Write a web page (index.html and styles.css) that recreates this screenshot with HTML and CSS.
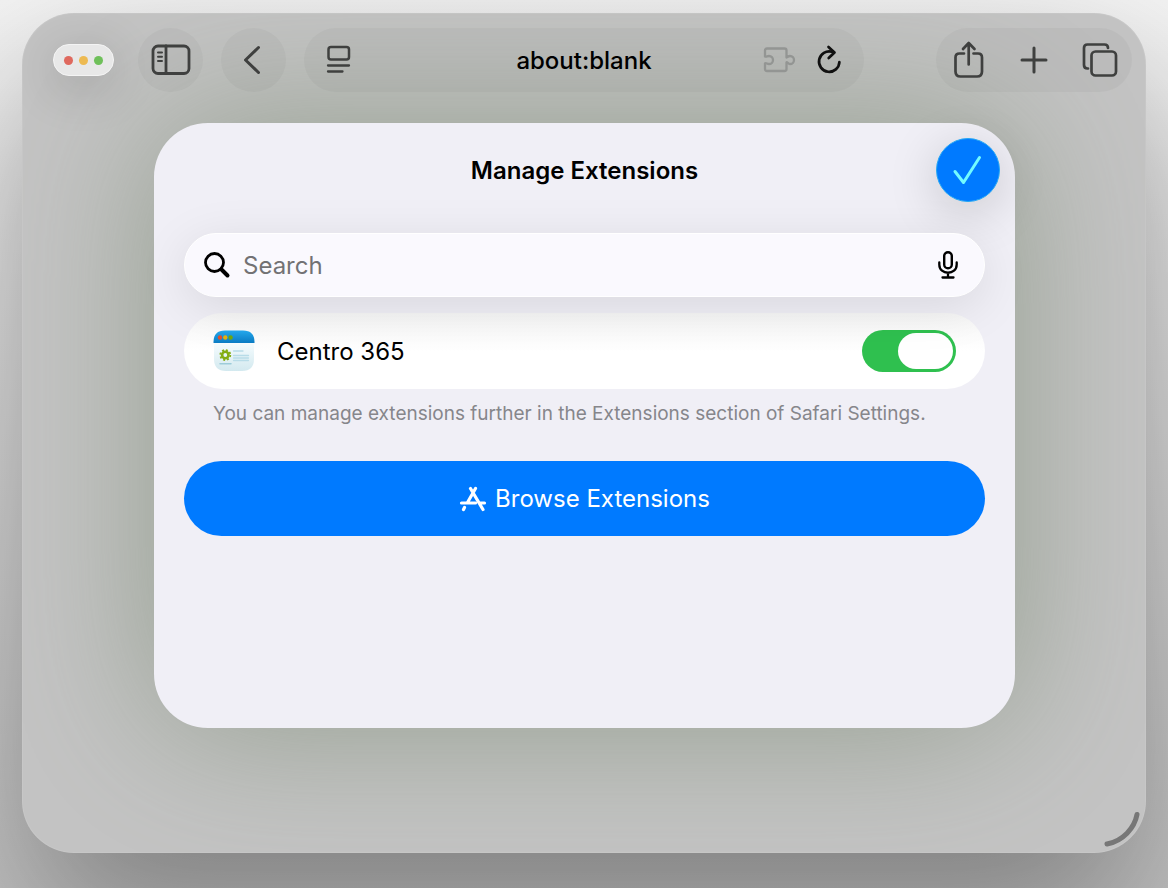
FILE: index.html
```html
<!DOCTYPE html>
<html lang="en">
<head>
  <meta charset="UTF-8">
  <meta name="viewport" content="width=device-width, initial-scale=1.0">
  <title>Manage Extensions</title>
  <link rel="stylesheet" href="styles.css">
</head>
<body>

  <div class="window">
    <header class="toolbar">
      <div class="window-controls">
        <span class="dot red"></span>
        <span class="dot yellow"></span>
        <span class="dot green"></span>
      </div>

      <button class="round-btn" type="button" aria-label="Show sidebar">
        <svg width="40" height="32" viewBox="0 0 40 32">
          <rect x="2" y="2" width="36" height="27.500" rx="5" stroke-width="2.800"/>
          <path d="M15 2v27" stroke-width="2.800"/>
          <path d="M7 8.500h4M7 12.700h4M7 17h4" stroke-width="2"/>
        </svg>
      </button>

      <button class="round-btn" type="button" aria-label="Back">
        <svg width="22" height="30" viewBox="0 0 22 30">
          <path d="M15.500 2.500L2.500 15l13 12.500" stroke-width="3"/>
        </svg>
      </button>

      <div class="address-bar">
        <button type="button" aria-label="Page menu">
          <svg width="26" height="30" viewBox="0 0 26 30">
            <rect x="2.500" y="2" width="20.500" height="12.500" rx="2.500" stroke-width="2.500"/>
            <path d="M2 20.500h21M2 26.500h14.500" stroke-width="2.300"/>
          </svg>
        </button>
        <a class="address" href="about:blank">about:blank</a>
        <button class="muted" type="button" aria-label="Extensions">
          <svg width="34" height="28" viewBox="0 0 34 28">
            <path d="M3 10.500V4.500Q3 2.500 5 2.500H22.500Q24.500 2.500 24.500 4.500V11.500C25.500 11.800 26 10 28 10A4 4 0 0 1 28 18C26 18 25.500 15.800 24.500 16.200V23Q24.500 25 22.500 25H5Q3 25 3 23V17.300C4.500 16.800 5 18 7 18A4 4 0 0 0 7 10C5 10 4.500 11.200 3 10.500Z" stroke-width="2.300"/>
          </svg>
        </button>
        <button class="dark" type="button" aria-label="Reload">
          <svg width="26" height="30" viewBox="0 0 26 30">
            <path d="M16 6.800A10.200 10.200 0 1 0 23.400 17" stroke-width="2.700"/>
            <path d="M12.500 2L18.500 7.500L12.700 13" stroke-width="2.700"/>
          </svg>
        </button>
      </div>

      <div class="actions">
        <button type="button" aria-label="Share">
          <svg width="32" height="40" viewBox="0 0 32 40">
            <path d="M11 13.500H6.500Q2.500 13.500 2.500 17.500V31.500Q2.500 36.500 7.500 36.500H24Q29 36.500 29 31.500V17.500Q29 13.500 25 13.500H20.500" stroke-width="2.700"/>
            <path d="M15.700 24.500V3M10 9L15.700 3L21.500 9" stroke-width="2.700"/>
          </svg>
        </button>
        <button type="button" aria-label="New tab">
          <svg width="28" height="28" viewBox="0 0 28 28">
            <path d="M14 2v24M2 14h24" stroke-width="3"/>
          </svg>
        </button>
        <button type="button" aria-label="Show tabs">
          <svg width="36" height="36" viewBox="0 0 36 36">
            <rect x="9.500" y="9.500" width="24.500" height="24" rx="4" stroke-width="2.700"/>
            <path d="M6 26.500H5.500Q2 26.500 2 23V6Q2 2.500 5.500 2.500H22.500Q26 2.500 26 6" stroke-width="2.700"/>
          </svg>
        </button>
      </div>
    </header>

    <main class="sheet">
      <div class="sheet-header">
        <h1>Manage Extensions</h1>
        <button class="done-btn" type="button" aria-label="Done">
          <svg width="34" height="34" viewBox="0 0 34 34">
            <path d="M4 18.500L12.500 29.500L28.500 4.500" stroke-width="3"/>
          </svg>
        </button>
      </div>

      <div class="search">
        <svg width="28" height="28" viewBox="0 0 28 28">
          <circle cx="11.500" cy="11.500" r="9" stroke-width="2.800"/>
          <path d="M18.500 18.500L24.500 24.500" stroke-width="4"/>
        </svg>
        <input type="text" placeholder="Search" aria-label="Search">
        <button type="button" aria-label="Dictate">
          <svg width="24" height="30" viewBox="0 0 24 30">
            <rect x="8.200" y="2.200" width="7.600" height="16" rx="3.800" stroke-width="2.400"/>
            <path d="M3.300 12.500V14.500C3.300 25.500 20.700 25.500 20.700 14.500V12.500M12 23V27M6.500 27.500H17.500" stroke-width="2.300"/>
          </svg>
        </button>
      </div>

      <div class="extension">
        <svg class="app-icon" width="42" height="42" viewBox="0 0 42 42">
          <defs>
            <linearGradient id="bar" x1="0" y1="0" x2="0" y2="1">
              <stop offset="0" stop-color="#25aaf0"/>
              <stop offset="1" stop-color="#0b7cc4"/>
            </linearGradient>
            <linearGradient id="page" x1="0" y1="0" x2="0" y2="1">
              <stop offset="0" stop-color="#f5fcfe"/>
              <stop offset="1" stop-color="#d3e9ef"/>
            </linearGradient>
          </defs>
          <path d="M1 13.500H41V29Q41 41 29 41H13Q1 41 1 29Z" fill="url(#page)"/>
          <path d="M0.500 13V12Q0.500 0.500 12 0.500H30Q41.500 0.500 41.500 12V13Z" fill="url(#bar)"/>
          <circle cx="7" cy="7.500" r="2.200" fill="#e8502a"/>
          <circle cx="12.300" cy="7.500" r="2.200" fill="#e9b20c"/>
          <circle cx="17.600" cy="7.500" r="2.200" fill="#70a80d"/>
          <circle cx="12.300" cy="25" r="3.200" fill="none" stroke="#84ad13" stroke-width="2.600"/>
          <circle cx="12.300" cy="25" r="5" fill="none" stroke="#84ad13" stroke-width="1.800" stroke-linecap="butt" stroke-dasharray="2 1.927"/>
          <path d="M20.500 21H30M20.500 25.500H35.500M20.500 28H35.500M20.500 30.500H35.500" stroke="#b8dce8" stroke-width="1.300"/>
          <path d="M7 33.800H18" stroke="#9dccd9" stroke-width="1.500"/>
        </svg>
        <label for="centro">Centro 365</label>
        <input class="switch" type="checkbox" role="switch" id="centro" checked>
      </div>
      <p class="note">You can manage extensions further in the Extensions section of Safari Settings.</p>

      <button class="browse-btn" type="button">
        <svg width="28" height="26" viewBox="0 0 28 26">
          <path d="M16.500 2.500L8.500 16.500M11.500 2.500L24 23.500M2.500 17H16.500M21 17H25.500M5.500 21.500L4.500 23.500" stroke-width="3.200"/>
        </svg>
        Browse Extensions
      </button>
    </main>

    <svg class="resize-handle" width="38" height="38" viewBox="0 0 38 38">
      <path d="M33 3.500C30.500 17 19 30 3 33" stroke-width="5"/>
    </svg>
  </div>

</body>
</html>
```
FILE: styles.css
```css
:root {
  --blue: #007aff;
  --green: #2fc04f;
  --icon: #3f403f;
  --sheet-bg: #f0eff6;
}

* {
  box-sizing: border-box;
  margin: 0;
  padding: 0;
}

body {
  display: flex;
  min-height: 100vh;
  padding: 13px 22px 35px;
  overflow: hidden;
  background: linear-gradient(#f4f4f4, #e6e6e6 30%, #d0d0d0 75%, #c4c4c4);
  color: #000;
  font-family: Inter, "Liberation Sans", sans-serif;
  font-size: 24px;
}

button, input {
  border: none;
  background: none;
  color: inherit;
  font: inherit;
}

button {
  display: flex;
  align-items: center;
  justify-content: center;
  cursor: pointer;
}

svg {
  display: block;
  flex: none;
  fill: none;
  stroke: currentColor;
  stroke-linecap: round;
  stroke-linejoin: round;
}

.window {
  position: relative;
  display: flex;
  flex: 1;
  flex-direction: column;
  overflow: hidden;
  background: #c4c4c4;
  border-radius: 52px;
  box-shadow: 0 70px 160px rgba(0, 0, 0, 0.36), inset 0 0 0 1px rgba(255, 255, 255, 0.08);
}

.toolbar {
  position: relative;
  z-index: 1;
  display: flex;
  align-items: center;
  padding: 15px 14px 0 31px;
  color: var(--icon);
}

.window-controls {
  display: flex;
  align-items: center;
  justify-content: center;
  gap: 6px;
  width: 61px;
  height: 32px;
  margin-right: 24px;
  background: #e8e8e8;
  border: 1px solid #f4f4f4;
  border-radius: 16px;
  box-shadow: 0 10px 50px rgba(0, 0, 0, 0.2);
}

.dot {
  width: 9px;
  height: 9px;
  border-radius: 50%;
}

.red {
  background: #df695e;
}

.yellow {
  background: #edba52;
}

.green {
  background: #6fc05a;
}

.round-btn {
  width: 65px;
  height: 64px;
  margin-right: 18px;
  background: rgba(0, 0, 0, 0.03);
  border-radius: 50%;
}

.address-bar {
  display: flex;
  flex: 1;
  align-items: center;
  gap: 20px;
  height: 64px;
  padding: 0 22px;
  background: rgba(0, 0, 0, 0.03);
  border-radius: 32px;
}

.address {
  flex: 1;
  padding-left: 54px;
  color: #000;
  font-weight: 500;
  text-align: center;
  text-decoration: none;
}

.muted {
  color: #939593;
}

.dark {
  color: #111;
}

.actions {
  display: flex;
  align-items: center;
  justify-content: space-between;
  width: 196px;
  height: 64px;
  margin-left: 72px;
  padding: 0 14px 0 17px;
  background: rgba(0, 0, 0, 0.03);
  border-radius: 32px;
}

.sheet {
  flex: 1;
  margin: 31px 131px 125px 132px;
  padding: 15px 30px 30px;
  background: var(--sheet-bg);
  border-radius: 54px;
  box-shadow: 0 0 150px rgba(120, 136, 112, 0.62);
}

.sheet-header {
  display: grid;
  grid-template-columns: 1fr auto 1fr;
  align-items: center;
  margin: 0 -15px 31px 0;
  padding-left: 15px;
}

h1 {
  grid-column: 2;
  padding-right: 30px;
  font-size: 24px;
  font-weight: 600;
}

.done-btn {
  justify-self: end;
  width: 64px;
  height: 64px;
  background: var(--blue);
  border: 1px solid #25a8f5;
  border-radius: 50%;
  box-shadow: 0 10px 50px rgba(0, 0, 0, 0.18);
  color: #72fbff;
}

.search {
  position: relative;
  display: flex;
  align-items: center;
  gap: 12px;
  height: 64px;
  margin-bottom: 16px;
  padding: 0 24px 0 18px;
  background: #faf9fe;
  border: 1px solid #fff;
  border-radius: 32px;
  box-shadow: 0 10px 50px rgba(0, 0, 0, 0.1);
}

.search input {
  flex: 1;
  min-width: 0;
  outline: none;
}

.search input::placeholder {
  color: #727274;
  opacity: 1;
}

.extension {
  display: flex;
  align-items: center;
  height: 76px;
  padding: 0 29px;
  background: linear-gradient(#f6f6f6, #fff 50%);
  border-radius: 38px;
}

.app-icon {
  margin-right: 22px;
  stroke: none;
}

.extension label {
  flex: 1;
}

.switch {
  width: 94px;
  height: 42px;
  padding: 3px;
  appearance: none;
  background: var(--green);
  border-radius: 21px;
  cursor: pointer;
}

.switch::before {
  content: "";
  display: block;
  width: 55px;
  height: 36px;
  background: #fff;
  border-radius: 18px;
}

.switch:checked::before {
  margin-left: auto;
}

.note {
  margin-bottom: 35px;
  padding: 13px 29px 0;
  color: #86868b;
  font-size: 19px;
  line-height: 24px;
}

.browse-btn {
  gap: 8px;
  width: 100%;
  height: 75px;
  background: var(--blue);
  border-radius: 38px;
  color: #fff;
}

.resize-handle {
  position: absolute;
  right: 4px;
  bottom: 4px;
  color: #777;
}
```
